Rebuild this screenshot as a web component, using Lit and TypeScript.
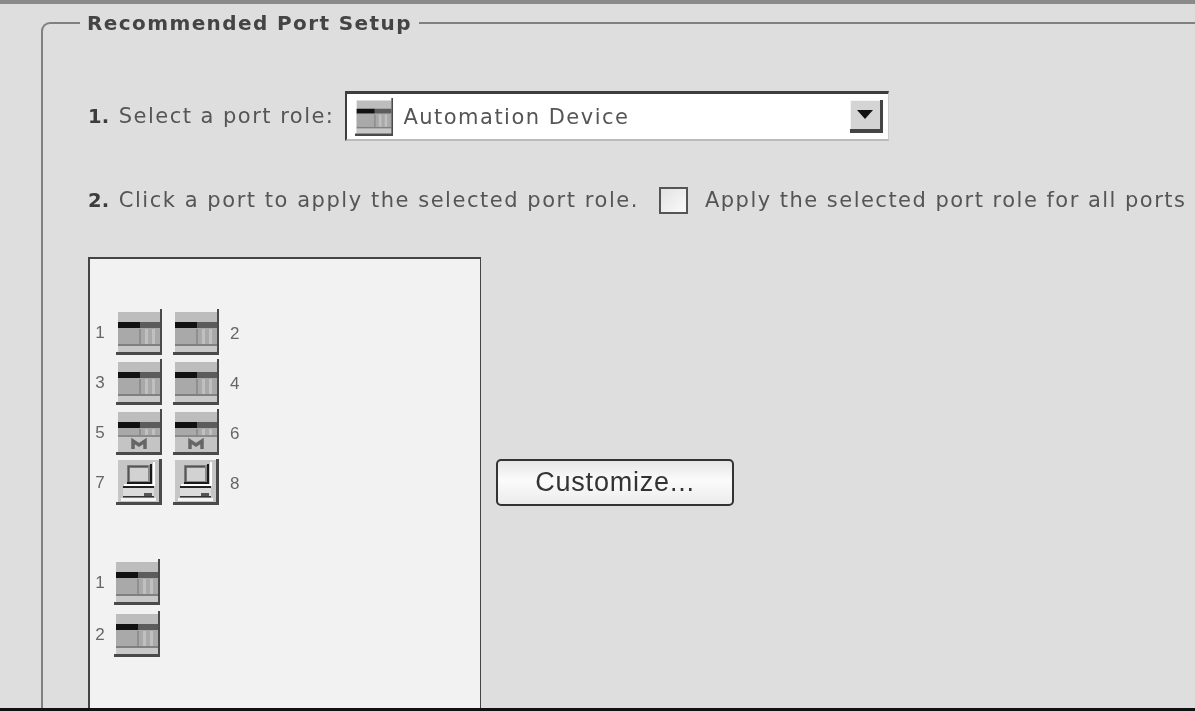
import { LitElement, html, css, svg } from "lit";
import { customElement } from "lit/decorators.js";

const device = (mark = false) => svg`<svg class="ico" viewBox="0 0 46 46">
  <rect x="2" y="3" width="42" height="40" fill="#bdbdbd"/>
  <rect x="2" y="13" width="22" height="6" fill="#111"/>
  <rect x="24" y="13" width="20" height="6" fill="#5c5c5c"/>
  <rect x="2" y="19" width="42" height="16" fill="#a9a9a9"/>
  <rect x="23" y="20" width="2" height="15" fill="#8f8f8f"/>
  <rect x="29" y="20" width="3" height="15" fill="#c0c0c0"/>
  <rect x="36" y="20" width="3" height="15" fill="#c0c0c0"/>
  <rect x="2" y="35" width="42" height="2" fill="#808080"/>
  <rect x="2" y="37" width="42" height="6" fill="#c8c8c8"/>
  ${mark ? svg`<rect x="2" y="28" width="42" height="15" fill="#c4c4c4"/><rect x="2" y="26" width="42" height="2" fill="#8a8a8a"/><path d="M17 40v-8l6 4 6-4v8" fill="none" stroke="#666" stroke-width="3.5"/>` : ""}
  <rect x="0" y="43" width="46" height="3" fill="#4a4a4a"/>
  <rect x="44" y="0" width="2" height="46" fill="#4a4a4a"/>
</svg>`;

const pc = svg`<svg class="ico" viewBox="0 0 46 46">
  <rect x="2" y="1" width="42" height="42" fill="#c6c6c6"/>
  <rect x="11" y="6" width="25" height="19" fill="#8a8a8a"/>
  <rect x="14" y="9" width="18" height="13" fill="#d2d2d2"/>
  <path d="M32 7.5H12.5V23" fill="none" stroke="#555" stroke-width="1.5"/>
  <path d="M35 5V24H11" fill="none" stroke="#1a1a1a" stroke-width="2"/>
  <path d="M8 26H38V3" fill="none" stroke="#fff" stroke-width="2"/>
  <rect x="7" y="27" width="31" height="2" fill="#222"/>
  <rect x="7" y="29" width="31" height="8" fill="#dcdcdc"/>
  <rect x="7" y="37" width="31" height="1.5" fill="#333"/>
  <rect x="28" y="34" width="8" height="3" fill="#555"/>
  <rect x="5" y="39" width="35" height="3" fill="#f4f4f4"/>
  <rect x="0" y="43" width="46" height="3" fill="#4a4a4a"/>
  <rect x="43" y="0" width="3" height="46" fill="#4a4a4a"/>
</svg>`;

@customElement("app-root")
export class AppRoot extends LitElement {
  static styles = css`
    :host { display: block; width: 1195px; height: 711px; overflow: hidden; background: #dedede; }
    .page { height: 711px; display: flex; flex-direction: column; box-sizing: border-box; overflow: hidden;
      border-top: 4px solid #8a8a8a; font-family: "DejaVu Sans", sans-serif; color: #555; filter: blur(0.7px); }
    .main { flex: 1; min-height: 0; padding: 6px 0 0 41px; overflow: hidden; }
    .bottom { height: 3px; background: #111; flex: none; }
    fieldset { margin: 0; padding: 0; border: solid #808080; border-width: 2px 0 0 2px; border-top-left-radius: 9px;
      height: 720px; box-sizing: border-box; min-width: 0; }
    legend { margin-left: 37px; padding: 0 7px; font-size: 20px; font-weight: 700; letter-spacing: 1.4px; color: #444; line-height: 26px; white-space: nowrap; }
    .body { padding-left: 45px; }
    b { color: #3c3c3c; font-size: 19.5px; letter-spacing: 0.3px; margin-right: 1px; }
    .step { font-size: 21px; letter-spacing: 1.48px; white-space: nowrap; display: flex; align-items: center; color: #555; }
    .s1 { margin-top: 55px; height: 50px; gap: 11px; }
    .s2 { margin-top: 45px; height: 28px; gap: 20px; letter-spacing: 1.54px; }
    .select { width: 544px; height: 50px; box-sizing: border-box; background: #fff; border: solid #3e3e3e; border-width: 3px 1px 2px 2px;
      border-bottom-color: #bbb; border-right-color: #ccc; display: flex; align-items: center; padding: 0 5px 0 8px; gap: 10px; color: #555; }
    .select .ico { width: 38px; height: 38px; }
    .grow { flex: 1; }
    .arrow { width: 33px; height: 33px; box-sizing: border-box; background: #d4d4d4; border: solid #444; border-width: 0 3px 4px 0;
      box-shadow: inset 1px 1px 0 #f4f4f4; display: flex; align-items: center; justify-content: center; }
    .arrow i { width: 0; height: 0; border: 8px solid transparent; border-top: 9px solid #111; border-bottom: 0; }
    .check { width: 29px; height: 27px; box-sizing: border-box; border: 2px solid #555; margin-right: -3px; background: linear-gradient(135deg, #e2e2e2, #fbfbfb); }
    .all { letter-spacing: 1.48px; }
    .row { display: flex; margin-top: 43px; gap: 15px; align-items: flex-start; }
    .panel { width: 393px; height: 520px; box-sizing: border-box; background: #f2f2f2; border: solid #444; border-width: 2px 1px 0 2px;
      padding: 50px 0 0 26px; font-family: "Liberation Sans", sans-serif; font-size: 17px; color: #666; }
    .ports { display: grid; grid-template-columns: 46px 46px 24px; column-gap: 11px; row-gap: 4px; }
    .cell { display: flex; align-items: center; height: 46px; position: relative; }
    .ico { display: block; width: 46px; height: 46px; flex: none; }
    .n { width: 16px; text-align: center; }
    .left { position: absolute; left: -24px; top: 14px; }
    .lower .left { left: -22px; }
    .pair { display: flex; align-items: center; height: 46px; padding-top: 4px; box-sizing: border-box; }
    .lower { margin-top: 54px; margin-left: -2px; display: flex; flex-direction: column; gap: 6px; }
    button { margin-top: 202px; width: 238px; height: 47px; box-sizing: border-box; border: 2px solid #333; border-radius: 5px;
      background: linear-gradient(#e6e6e6, #fbfbfb 45%, #ececec); font-family: "Liberation Sans", sans-serif; font-size: 27px; letter-spacing: 0.8px; color: #333; padding: 0; }
  `;

  private port(n: number, ico: unknown) {
    return html`<div class="cell">${ico}<span class="n left">${n}</span></div>`;
  }

  render() {
    const d = device();
    const m = device(true);
    return html`<div class="page">
      <div class="main">
        <fieldset>
          <legend>Recommended Port Setup</legend>
          <div class="body">
            <div class="step s1">
              <span><b>1.</b> Select a port role:</span>
              <div class="select">${d}<span class="grow">Automation Device</span><div class="arrow"><i></i></div></div>
            </div>
            <div class="step s2">
              <span><b>2.</b> Click a port to apply the selected port role.</span>
              <div class="check"></div>
              <span class="all">Apply the selected port role for all ports</span>
            </div>
            <div class="row">
              <div class="panel">
                <div class="ports">
                  ${this.port(1, d)}<div class="cell">${d}</div><div class="pair">2</div>
                  ${this.port(3, d)}<div class="cell">${d}</div><div class="pair">4</div>
                  ${this.port(5, m)}<div class="cell">${m}</div><div class="pair">6</div>
                  ${this.port(7, pc)}<div class="cell">${pc}</div><div class="pair">8</div>
                </div>
                <div class="lower">
                  ${this.port(1, d)}
                  ${this.port(2, d)}
                </div>
              </div>
              <button>Customize...</button>
            </div>
          </div>
        </fieldset>
      </div>
      <div class="bottom"></div>
    </div>`;
  }
}
